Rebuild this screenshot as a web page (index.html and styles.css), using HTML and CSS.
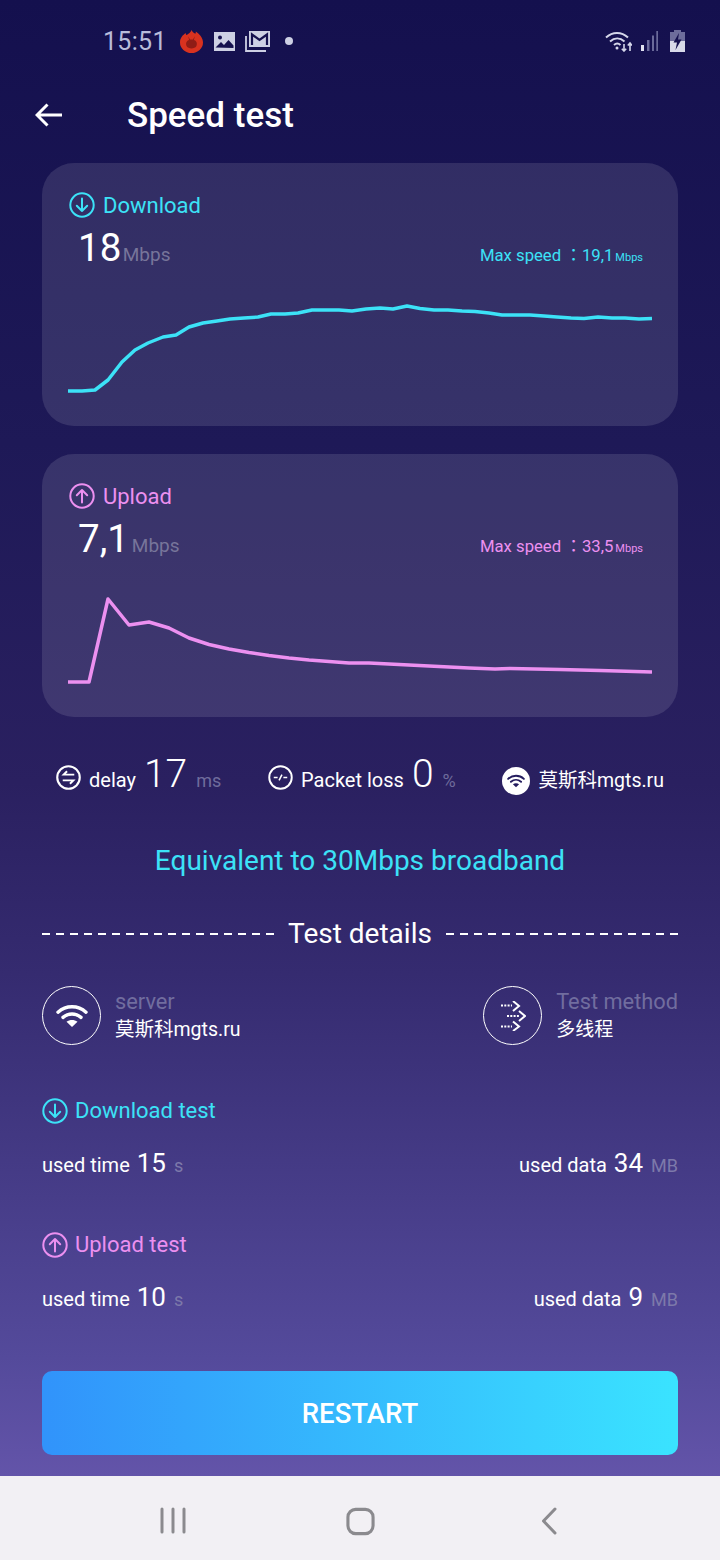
FILE: index.html
```html
<!DOCTYPE html>
<html lang="en">
<head>
<meta charset="utf-8">
<title>Speed test</title>
<link rel="stylesheet" href="styles.css">
</head>
<body>
<svg class="defs" width="0" height="0" aria-hidden="true">
  <symbol id="i-down" viewBox="0 0 26 26"><circle cx="13" cy="13" r="11.7" fill="none" stroke="currentColor" stroke-width="2"/><path d="M13 6.5V19M7.8 13.8 13 19l5.2-5.2" fill="none" stroke="currentColor" stroke-width="2" stroke-linecap="round" stroke-linejoin="round"/></symbol>
  <symbol id="i-up" viewBox="0 0 26 26"><circle cx="13" cy="13" r="11.7" fill="none" stroke="currentColor" stroke-width="2"/><path d="M13 19.5V7M7.8 12.2 13 7l5.2 5.2" fill="none" stroke="currentColor" stroke-width="2" stroke-linecap="round" stroke-linejoin="round"/></symbol>
  <symbol id="i-wifi" viewBox="0 0 32 24"><path d="M2 8.2C10 1 22 1 30 8.2M7 13.4c5.400-4.600 12.600-4.600 18 0" fill="none" stroke="currentColor" stroke-width="3.400" stroke-linecap="round"/><path d="M16 23l-5.500-5.200c3.300-2.400 7.700-2.400 11 0z" fill="currentColor"/></symbol>
</svg>
<div class="screen">
  <main class="app">
    <div class="status">
      <div class="status-left">
        <span class="clock">15:51</span>
        <svg class="s-antutu" viewBox="0 0 24 24"><path d="M12 0c1 2 2 3 4 4 .5-1 .5-1.500.5-2.500C20 4 24 8 24 13a12 11 0 0 1-24 0C0 8 3 5 6 3c0 1 .3 1.500 1 2.200C9 4 11 2.500 12 0z" fill="#d8321f"/><path d="M7 17c-1.500-3 0-6 2.500-6.500L8.500 6.500l2 3.500h3l2-3.500-1 4C17 11 18.500 14 17 17c-1.500 3-8.500 3-10 0z" fill="#8f1d16"/></svg>
        <svg class="s-pic" viewBox="0 0 21 19"><path d="M0 0h21v19H0z" fill="#cdd0e4"/><circle cx="6" cy="5.500" r="2" fill="#15114f"/><path d="M1.500 15.500 7 10l3 3 4.500-5 5 5.500v2.500z" fill="#15114f"/></svg>
        <svg class="s-mail" viewBox="0 0 25 21"><path d="M1 5v15h20" fill="none" stroke="#cdd0e4" stroke-width="1.800"/><path d="M4 0h21v16H4z" fill="#cdd0e4"/><path d="M7 14V3.500l7.500 5.500L22 3.500V14" fill="none" stroke="#15114f" stroke-width="2.200"/></svg>
        <span class="s-dot"></span>
      </div>
      <div class="status-right">
        <svg class="s-wifi" viewBox="0 0 27 21"><path d="M1 6.500C7.500.5 16.500.5 23 6.500M5 10.500c4.500-4 10-4 14.500 0M9 14c2-1.800 4.500-1.800 6.500 0" fill="none" stroke="#d5d7ea" stroke-width="2"/><circle cx="12" cy="17" r="1.500" fill="#d5d7ea"/><path d="M19 13v7M16.800 17.800 19 20l2.200-2.200M25 20v-8M22.800 14.500 25 12l2 2.500" fill="none" stroke="#d5d7ea" stroke-width="1.600"/></svg>
        <svg class="s-signal" viewBox="0 0 17 20"><path d="M0 14h3v6H0z" fill="#e2e3f1"/><path d="M6 9h2.500v11H6zM11 4.500h2v15.500h-2zM15.300 0h1.700v20h-1.700z" fill="#6a6a9a"/></svg>
        <svg class="s-batt" viewBox="0 0 15 22"><path d="M4 0h7v2h4v20H0V2h4z" fill="#6d6d9b"/><path d="M0 11h15v11H0z" fill="#d8dae9"/><path d="M9 3 3.500 12.500h3.500L5.500 20l6-10.500H8z" fill="#15114f"/></svg>
      </div>
    </div>

    <header class="header">
      <svg class="back" viewBox="0 0 28 24"><path d="M27 12H2M12.500 1.500 2 12l10.500 10.500" fill="none" stroke="#fff" stroke-width="3"/></svg>
      <h1 class="title">Speed test</h1>
    </header>

    <section class="card cyan">
      <div class="card-head"><svg class="ic26"><use href="#i-down"/></svg><span class="card-label">Download</span></div>
      <div class="card-value">
        <span class="big">18</span><span class="unit">Mbps</span>
        <span class="max">Max speed ：19,1<small>Mbps</small></span>
      </div>
      <svg class="chart" viewBox="42 270 636 156"><polyline points="68,391 82,391 95,390 108,380 122,362 135,350 148,343 163,337 176,335 189,327 203,323 217,321 230,319 244,318 258,317 271,314 285,314 298,313 312,310 325,310 339,310 352,311 366,309 380,308 393,309 407,306 420,308.500 434,310 448,310 462,311 475,311.500 489,313 502,315 516,315 530,315 544,316 557,317 571,318 584,318.500 598,317 612,318 625,318 639,319 652,318.500"/></svg>
    </section>

    <section class="card pink">
      <div class="card-head"><svg class="ic26"><use href="#i-up"/></svg><span class="card-label">Upload</span></div>
      <div class="card-value">
        <span class="big">7,1</span><span class="unit unit-gap">Mbps</span>
        <span class="max">Max speed ：33,5<small>Mbps</small></span>
      </div>
      <svg class="chart" viewBox="42 561 636 156"><polyline points="68,682 89,682 108,599 129,625 149,622 169,628 189,638 209,644.500 229,649 249,652.500 269,655.500 289,658 309,660 329,661.500 349,663 369,663 389,664 429,666 469,668 495,669 510,668.500 560,669.500 600,670.500 652,672"/></svg>
    </section>

    <div class="stats">
      <div class="stat">
        <svg class="ic25" viewBox="0 0 26 26"><circle cx="13" cy="13" r="11.700" fill="none" stroke="#fff" stroke-width="2.200"/><path d="M19 10H8l3.500-3.500M7 16h11l-3.500 3.500" fill="none" stroke="#fff" stroke-width="2"/></svg>
        <span class="stat-label">delay</span><span class="stat-num">17</span><span class="stat-unit">ms</span>
      </div>
      <div class="stat">
        <svg class="ic25" viewBox="0 0 26 26"><circle cx="13" cy="13" r="11.700" fill="none" stroke="#fff" stroke-width="2"/><path d="M6 13h4M16 13h4M11.500 16l3-6" fill="none" stroke="#fff" stroke-width="1.600"/></svg>
        <span class="stat-label">Packet loss</span><span class="stat-num">0</span><span class="stat-unit">%</span>
      </div>
      <div class="stat">
        <span class="wifi-disc"><svg class="wifi-sm"><use href="#i-wifi"/></svg></span>
        <span class="stat-label server-name">莫斯科mgts.ru</span>
      </div>
    </div>

    <p class="equiv">Equivalent to 30Mbps broadband</p>

    <div class="divider"><span class="dash"></span><span class="divider-text">Test details</span><span class="dash"></span></div>

    <div class="info">
      <div class="info-item">
        <span class="ring"><svg class="wifi-lg"><use href="#i-wifi"/></svg></span>
        <div class="info-text"><span class="info-key">server</span><span class="info-val">莫斯科mgts.ru</span></div>
      </div>
      <div class="info-item">
        <span class="ring"><svg class="arrows" viewBox="0 0 26 30"><path d="M1 4.500h11M7 15h12M1 25.500h11" fill="none" stroke="#fff" stroke-width="1.800" stroke-dasharray="2 1.300"/><path d="M13 0l6 5-6 5M19 10l6 5-6 5M13 20.500l6 5-6 4.500" fill="none" stroke="#fff" stroke-width="2"/></svg></span>
        <div class="info-text"><span class="info-key">Test method</span><span class="info-val info-cjk">多线程</span></div>
      </div>
    </div>

    <div class="section cyan sec-first"><svg class="ic26"><use href="#i-down"/></svg><span class="section-label">Download test</span></div>
    <div class="metrics">
      <div class="metric"><span class="m-label">used time</span><span class="m-num">15</span><span class="m-unit">s</span></div>
      <div class="metric"><span class="m-label">used data</span><span class="m-num">34</span><span class="m-unit">MB</span></div>
    </div>
    <div class="section pink sec-second"><svg class="ic26"><use href="#i-up"/></svg><span class="section-label">Upload test</span></div>
    <div class="metrics">
      <div class="metric"><span class="m-label">used time</span><span class="m-num">10</span><span class="m-unit">s</span></div>
      <div class="metric"><span class="m-label">used data</span><span class="m-num">9</span><span class="m-unit">MB</span></div>
    </div>

    <button class="restart">RESTART</button>
  </main>

  <nav class="navbar">
    <svg class="n-recent" viewBox="0 0 26 27"><path d="M2 2v23M13 2v23M24 2v23" fill="none" stroke="#8b8a8e" stroke-width="3" stroke-linecap="round"/></svg>
    <svg class="n-home" viewBox="0 0 30 30"><rect x="2" y="2.500" width="26" height="25" rx="8" fill="none" stroke="#8b8a8e" stroke-width="3.200"/></svg>
    <svg class="n-back" viewBox="0 0 16 28"><path d="M14 2 2.500 14 14 26" fill="none" stroke="#8b8a8e" stroke-width="3" stroke-linecap="round" stroke-linejoin="round"/></svg>
  </nav>
</div>
</body>
</html>
```

FILE: styles.css
```css
* { box-sizing: border-box; }
html, body { margin: 0; padding: 0; }
body { width: 720px; height: 1560px; overflow: hidden; font-family: Roboto, "Noto Sans CJK SC", sans-serif; color: #fff; }
.defs { display: block; width: 0; height: 0; overflow: hidden; }
.screen { width: 720px; height: 1560px; display: flex; flex-direction: column; }
.app { height: 1476px; padding: 0 42px; background: linear-gradient(180deg, #14104e 0%, #1e1957 30%, #2a2060 53%, #352b70 66%, #544a9b 92%, #6354a9 100%); }
.navbar { height: 84px; background: #f2f0f4; position: relative; }

.status { height: 82px; margin: 0 -42px; padding: 0 35px 0 103px; display: flex; justify-content: space-between; align-items: center; }
.status-left, .status-right { display: flex; align-items: center; }
.clock { font-size: 25px; color: #b8bcda; width: 77px; letter-spacing: .3px; }
.s-antutu { width: 23px; height: 23px; margin-right: 11px; }
.s-pic { width: 21px; height: 19px; margin-right: 10px; }
.s-mail { width: 25px; height: 21px; margin-right: 15px; }
.s-dot { width: 8px; height: 8px; border-radius: 50%; background: #cdd0e4; }
.s-wifi { width: 27px; height: 21px; margin-right: 9px; }
.s-signal { width: 17px; height: 20px; margin-right: 12px; }
.s-batt { width: 15px; height: 22px; }

.header { height: 66px; margin: 0 -7px 15px; display: flex; align-items: center; }
.back { width: 28px; height: 24px; margin-right: 64px; }
.title { margin: 2px 0 0; font-size: 35px; line-height: 40px; font-weight: 500; }

.cyan { color: #3ce2f7; }
.pink { color: #ec90f0; }
.card { height: 263px; margin-bottom: 28px; border-radius: 32px; background: rgba(255, 255, 255, .115); padding-top: 29px; display: flex; flex-direction: column; }
.card-head { display: flex; align-items: center; height: 26px; padding-left: 27px; }
.ic26 { width: 26px; height: 26px; margin-right: 8px; flex: none; }
.card-label { font-size: 22px; line-height: 26px; margin-top: 2px; }
.section-label { font-size: 22px; line-height: 26px; margin-left: -1px; }
.card-value { height: 44px; margin-top: 8px; padding: 0 35px 0 36px; display: flex; align-items: baseline; line-height: 44px; }
.big { font-size: 38.500px; color: #fff; }
.unit { font-size: 19px; color: #77759a; margin-left: 1.500px; }
.unit-gap { margin-left: 3px; }
.max { margin-left: auto; font-family: Roboto, "Noto Sans CJK TC", sans-serif; font-size: 16.700px; }
.max small { font-size: 11px; margin-left: 2px; }
.chart { display: block; width: 636px; height: 156px; }
.chart polyline { fill: none; stroke: currentColor; stroke-width: 3.500; stroke-linejoin: round; }

.stats { height: 50px; margin-top: 32px; padding: 0 14px; display: flex; justify-content: space-between; align-items: baseline; line-height: 50px; }
.stat { display: flex; align-items: baseline; }
.ic25 { width: 25px; height: 25px; margin-right: 8px; align-self: center; }
.stat-label { font-size: 20px; }
.server-name { font-size: 19.500px; }
.stat-num { font-size: 39px; font-weight: 300; margin-left: 8px; }
.stat-unit { font-size: 18px; color: #6f6c9c; margin-left: 9px; }
.wifi-disc { width: 28px; height: 28px; border-radius: 50%; background: #fff; color: #241c5e; margin-right: 8px; display: flex; align-items: center; justify-content: center; align-self: center; }
.wifi-sm { width: 18px; height: 14px; }

.equiv { margin: 42px 0 0; height: 40px; line-height: 40px; text-align: center; font-size: 28px; color: #3ce2f7; }
.divider { height: 40px; margin-top: 33px; display: flex; align-items: center; justify-content: space-between; }
.dash { width: 232px; height: 2px; background: repeating-linear-gradient(90deg, #fff 0 8px, transparent 8px 14px); }
.divider-text { font-size: 28px; line-height: 40px; }

.info { margin-top: 32px; height: 59px; display: flex; justify-content: space-between; }
.info-item { display: flex; align-items: center; }
.ring { width: 59px; height: 59px; border-radius: 50%; border: 1px solid #fff; display: flex; align-items: center; justify-content: center; margin-right: 14px; }
.wifi-lg { width: 32px; height: 24px; color: #fff; }
.arrows { width: 26px; height: 30px; }
.info-text { display: flex; flex-direction: column; }
.info-key { font-size: 21.800px; line-height: 28px; color: #716d9f; }
.info-val { font-size: 19.500px; line-height: 28px; }
.info-cjk { font-size: 19px; }

.section { height: 26px; display: flex; align-items: center; }
.sec-first { margin-top: 53px; }
.sec-second { margin-top: 49px; }
.metrics { height: 40px; margin-top: 19px; display: flex; justify-content: space-between; align-items: baseline; line-height: 40px; }
.metric { display: flex; align-items: baseline; }
.m-label { font-size: 20px; }
.m-num { font-size: 26px; margin-left: 7px; }
.m-unit { font-size: 18px; color: #7d79aa; margin-left: 8px; }

.restart { display: block; width: 636px; height: 84px; margin-top: 54px; border: 0; border-radius: 10px; background: linear-gradient(90deg, #3193fb, #3ae3ff); color: #fff; font: 500 27.500px Roboto, sans-serif; }

.n-recent { position: absolute; left: 160px; top: 31px; width: 26px; height: 27px; }
.n-home { position: absolute; left: 346px; top: 31px; width: 29px; height: 29px; }
.n-back { position: absolute; left: 541px; top: 31px; width: 16px; height: 28px; }
```
